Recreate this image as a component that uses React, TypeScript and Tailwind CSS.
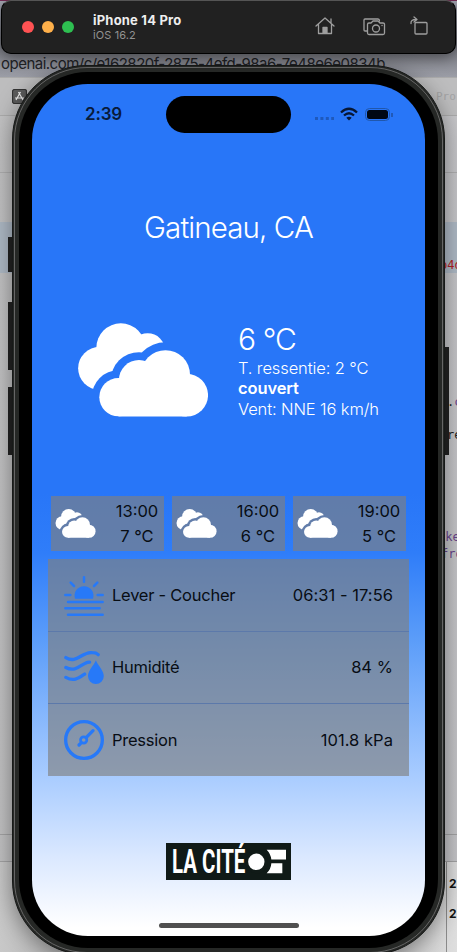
import React from "react";

function Clouds({ className }: { className: string }) {
  return (
    <svg viewBox="52 68 392 284" className={className} fill="white">
      <mask id="cloud-gap" maskUnits="userSpaceOnUse" x="40" y="50" width="420" height="320">
        <rect x="40" y="50" width="420" height="320" fill="white" />
        <g fill="black">
          <circle cx="174" cy="292" r="81" />
          <circle cx="236" cy="241" r="85" />
          <circle cx="316" cy="224" r="98" />
        </g>
      </mask>
      <g mask="url(#cloud-gap)">
        <circle cx="117" cy="205" r="65" />
        <circle cx="181" cy="143" r="74" />
        <circle cx="262" cy="152" r="53" />
        <path d="M110 190 180 120 260 140V200L150 250Z" />
      </g>
      <circle cx="174" cy="292" r="58" />
      <circle cx="236" cy="241" r="61" />
      <circle cx="316" cy="224" r="74" />
      <circle cx="380" cy="286" r="64.5" />
      <path d="M174 350.500V270L240 220 380 225V350.500Z" />
    </svg>
  );
}

function SunIcon() {
  return (
    <svg viewBox="0 0 120 120" className="h-10 w-10" fill="none" stroke="#2779f8" strokeWidth="7.500" strokeLinecap="round">
      <path d="M33 68A28.500 28.500 0 1 1 87 68Z" fill="#2779f8" stroke="none" />
      <path d="M60 4V17M20 20 30 30M100 20 90 30M4 57H19M101 57H116M12 78H116M4 97H107M12 116H116" />
    </svg>
  );
}

function HumidityIcon() {
  return (
    <svg viewBox="0 0 120 100" className="h-[33px] w-10" fill="none" stroke="#2779f8" strokeWidth="10" strokeLinecap="round">
      <path d="M5 20C37 40 53 2 85 5Q97 5 103 11M5 50C33 65 49 43 64 37Q70 34 77 34M5 80C30 94 44 82 62 70" />
      <path d="M96 28C90 44 72 59 72 76A24 24 0 0 0 120 76C120 59 102 44 96 28Z" fill="#2779f8" stroke="none" />
    </svg>
  );
}

function PressureIcon() {
  return (
    <svg viewBox="0 0 120 120" className="h-10 w-10" fill="none" stroke="#2779f8" strokeWidth="10" strokeLinecap="round">
      <circle cx="60" cy="60" r="55" />
      <circle cx="59" cy="60" r="9.500" strokeWidth="8" />
      <path d="M45 75 50 70M67 52 87 32" />
    </svg>
  );
}

function Logo() {
  return (
    <svg viewBox="0 0 375 110" className="h-[37px] w-[125px]" preserveAspectRatio="none">
      <rect width="375" height="110" fill="#101a17" />
      <text x="18" y="90" fill="white" fontSize="97" fontWeight="700" fontFamily="Roboto, sans-serif" textLength="220" lengthAdjust="spacingAndGlyphs">LA CITÉ</text>
      <circle cx="272" cy="56" r="34" fill="#101a17" />
      <circle cx="271" cy="56" r="24.500" fill="white" />
      <path d="M302 20H360V49H316Q314 32 302 20ZM316 60H349V90H302Q315 77 316 60Z" fill="white" />
    </svg>
  );
}

function Backdrop() {
  return (
    <div className="absolute inset-0 overflow-hidden bg-[#bfbfc0]">
      <div className="h-[77px] bg-gradient-to-b from-[#a9abb7] via-[#777880] to-[#9b9da6]" />
      <div className="h-[39px] border-y border-[#aaa] bg-[#bdbdbe]" />
      <div className="h-[746px] border-b border-[#a2a2a3] bg-gradient-to-r from-[#c1c1c2] via-[#aaa] to-[#c5c5c8]" />
      <div className="h-[90px] bg-gradient-to-r from-[#c8c8c8] via-[#888] to-[#dedede]" />
      <div className="absolute left-0 top-[222px] h-[51px] w-full bg-[#adb8c4]" />
      <div className="absolute left-0 top-0 h-px w-full bg-[#792c56]" />
      <div className="absolute left-px top-[55px] whitespace-nowrap font-['Inter'] text-[15px] leading-[18px] tracking-[-0.510px] text-[#222327]">openai.com/c/e162820f-2875-4efd-98a6-7e48e6e0834b</div>
      <svg className="absolute left-3 top-[89px] h-[15px] w-[15px]" viewBox="0 0 15 15" fill="none" stroke="#eee" strokeWidth="1.2">
        <rect x=".5" y=".5" width="14" height="14" rx="2" fill="#5c5c5c" stroke="#333" />
        <path d="M8.500 3 4 11M6.500 3 11 11M3 9H12" />
      </svg>
      <div className="absolute left-[436px] top-[89px] font-['DejaVu_Sans_Mono'] text-[11px] text-[#a3a3a4]">Pro</div>
      <div className="absolute left-0 top-[172px] h-px w-full bg-[#adadae]" />
      <div className="absolute left-0 top-[834px] h-px w-full bg-[#a2a2a3]" />
      <div className="absolute left-[446px] top-[862px] h-[90px] w-px bg-[#8b8b8b]" />
      <div className="absolute left-[440px] top-[257px] font-['DejaVu_Sans_Mono'] text-[12px] leading-4 text-[#b21e24]">b4d</div>
      <div className="absolute left-[447px] top-[394px] font-['DejaVu_Sans_Mono'] text-[12px] leading-4 text-[#222]">.<span className="text-[#68448b]">c</span></div>
      <div className="absolute left-[447px] top-[427px] font-['DejaVu_Sans_Mono'] text-[12px] leading-4 text-[#222]">re</div>
      <div className="absolute left-[438px] top-[529px] font-['DejaVu_Sans_Mono'] text-[12px] leading-4 text-[#68448b]">ake</div>
      <div className="absolute left-[441px] top-[546px] font-['DejaVu_Sans_Mono'] text-[12px] leading-4 text-[#68448b]">fro</div>
      <div className="absolute left-[449px] top-[876px] font-['Inter'] text-[12px] font-bold leading-4 text-[#111]">2</div>
      <div className="absolute left-[449px] top-[906px] font-['Inter'] text-[12px] font-bold leading-4 text-[#111]">2</div>
    </div>
  );
}

function Toolbar() {
  return (
    <header className="absolute left-px top-0 flex h-[54px] w-[455px] items-center rounded-[10px] border border-black border-t-[#555] bg-[#212121] pl-5 shadow-[0_3px_16px_rgba(0,0,0,0.5)]">
      <div className="flex gap-2">
        <i className="h-3 w-3 rounded-full bg-[#ff5253]" />
        <i className="h-3 w-3 rounded-full bg-[#ffb04a]" />
        <i className="h-3 w-3 rounded-full bg-[#2ebf51]" />
      </div>
      <div className="ml-[19px] flex-1">
        <div className="text-[13px] font-bold leading-[15px] tracking-[0.200px] text-[#eee]">iPhone 14 Pro</div>
        <div className="text-[11px] leading-[14px] tracking-[0.100px] text-[#929292]">iOS 16.2</div>
      </div>
      <svg viewBox="0 0 118 24" className="mb-[2px] mr-[23px] h-6 w-[118px]" fill="none" stroke="#9e9e9e" strokeWidth="1.300" strokeLinejoin="round" strokeLinecap="round">
        <path d="M2 12 11 4 20 12M4.500 10V19.500H17.500V10M17 9V5" />
        <path d="M9 19V13.500H13V19" fill="#9e9e9e" />
        <path d="M53 17H51Q50 17 50 16V6Q50 5 51 5H64Q65.500 5 65.500 7" />
        <path d="M55 9H57L59 7H64L66 9H69Q70.500 9 70.500 10V19Q70.500 20.500 69 20.500H55Q53.500 20.500 53.500 19V10.500Q53.500 9 55 9Z" />
        <circle cx="62" cy="14.500" r="3.500" />
        <path d="M68 11.500H68.100" />
        <rect x="101" y="8.500" width="12" height="11.500" rx="1" />
        <path d="M97 9.500Q96.500 5.500 102 5.500M100 3 103 5.500 100 8" />
      </svg>
    </header>
  );
}

function StatusBar() {
  return (
    <div className="mb-[2px] grid h-[59px] grid-cols-[134px_125px_134px] items-center">
      <div className="pl-[9px] text-center text-[17px] font-semibold leading-5 tracking-[-0.200px] text-[#081b3c]">2:39</div>
      <div className="mt-[2px] h-[37px] rounded-full bg-black" />
      <svg viewBox="0 0 82 16" className="ml-[21px] h-4 w-[82px]" fill="none" stroke="#071735">
        <path d="M3 12.500H22" stroke="#1e59bc" strokeWidth="3" strokeDasharray="3 2.400" />
        <path d="M29 6.500Q37-1 45 6.500M32 9.500Q37 5 42 9.500" strokeWidth="2.300" />
        <path d="M34.300 11.800Q37 9.700 39.700 11.800L37 14.500Z" fill="#071735" stroke="none" />
        <rect x="53.500" y="2.500" width="24" height="12" rx="4" stroke="#2057ac" />
        <rect x="55" y="4" width="21" height="9" rx="2.500" fill="#000814" stroke="none" />
        <path d="M80 7V11" stroke="#1f50a2" strokeWidth="1.500" />
      </svg>
    </div>
  );
}

function Forecast({ time, temp }: { time: string; temp: string }) {
  return (
    <div className="flex h-[55px] w-[113px] items-center justify-between bg-[#808080]/65 pl-1">
      <Clouds className="h-[29px] w-[41px]" />
      <div className="w-[54px] pt-px text-center text-[16.500px] leading-[25.500px] text-[#080d14]">
        <div>{time}</div>
        <div>{temp}</div>
      </div>
    </div>
  );
}

function InfoRow({ icon, label, value }: { icon: React.ReactNode; label: string; value: string }) {
  return (
    <div className="flex h-[72px] items-center px-4 pt-px text-[16.500px] tracking-[-0.250px] text-[#080d14]">
      <div className="mr-2 flex w-10 justify-center">{icon}</div>
      <span className="flex-1">{label}</span>
      <span className="tracking-[0.040px]">{value}</span>
    </div>
  );
}

export default function App() {
  return (
    <div className="relative h-[952px] w-[457px] overflow-hidden font-['Inter',sans-serif]">
      <Backdrop />
      <i className="absolute left-2 top-[237px] h-[35px] w-2 bg-[#222]" />
      <i className="absolute left-2 top-[302px] h-[68px] w-2 bg-[#222]" />
      <i className="absolute left-2 top-[387px] h-[68px] w-2 bg-[#222]" />
      <i className="absolute left-[442px] top-[347px] h-[108px] w-[7px] bg-[#222]" />
      <div className="absolute left-3 top-[65px] h-[890px] w-[433px] rounded-[74px] border border-[#171918] bg-[#262826] p-px shadow-[0_5px_22px_rgba(0,0,0,0.4)]">
        <div className="h-full w-full rounded-[73px] border border-[#666] p-[4px]">
          <div className="h-full w-full rounded-[69px] bg-black px-[13px] py-3">
            <main className="flex h-[852px] w-[393px] flex-col items-center overflow-hidden rounded-[56px] bg-[linear-gradient(to_bottom,#2876f8_48%,#2f7df9_55%,#5a9cf9_65%,#a7cbff_81%,#dce9ff_91%,#fff_99%)]">
              <StatusBar />
              <h1 className="mt-[62px] text-[29.500px] font-light leading-[40px] tracking-[-0.900px] text-white">Gatineau, CA</h1>
              <section className="mt-[73px] flex h-[100px] w-full items-center pl-[46px] text-white">
                <Clouds className="h-[94px] w-[130px]" />
                <div className="ml-[30px] text-[16.500px] leading-[20.300px] tracking-[-0.120px]">
                  <div className="mb-[1px] text-[30px] font-light leading-[36px] tracking-[-0.900px]">6 °C</div>
                  <div className="font-light">T. ressentie: 2 °C</div>
                  <div className="font-semibold">couvert</div>
                  <div className="font-light">Vent: NNE 16 km/h</div>
                </div>
              </section>
              <section className="mt-[76px] flex gap-2">
                <Forecast time="13:00" temp="7 °C" />
                <Forecast time="16:00" temp="6 °C" />
                <Forecast time="19:00" temp="5 °C" />
              </section>
              <section className="mt-2 w-[361px] divide-y divide-[#5c79aa] bg-[#808080]/65 pt-[0.500px]">
                <InfoRow icon={<SunIcon />} label="Lever - Coucher" value="06:31 - 17:56" />
                <InfoRow icon={<HumidityIcon />} label="Humidité" value="84 %" />
                <InfoRow icon={<PressureIcon />} label="Pression" value="101.8 kPa" />
              </section>
              <div className="mt-[67px] h-[37px]"><Logo /></div>
              <div className="mt-[43px] h-[5px] w-[140px] rounded-full bg-[#505050]" />
            </main>
          </div>
        </div>
      </div>
      <Toolbar />
    </div>
  );
}
